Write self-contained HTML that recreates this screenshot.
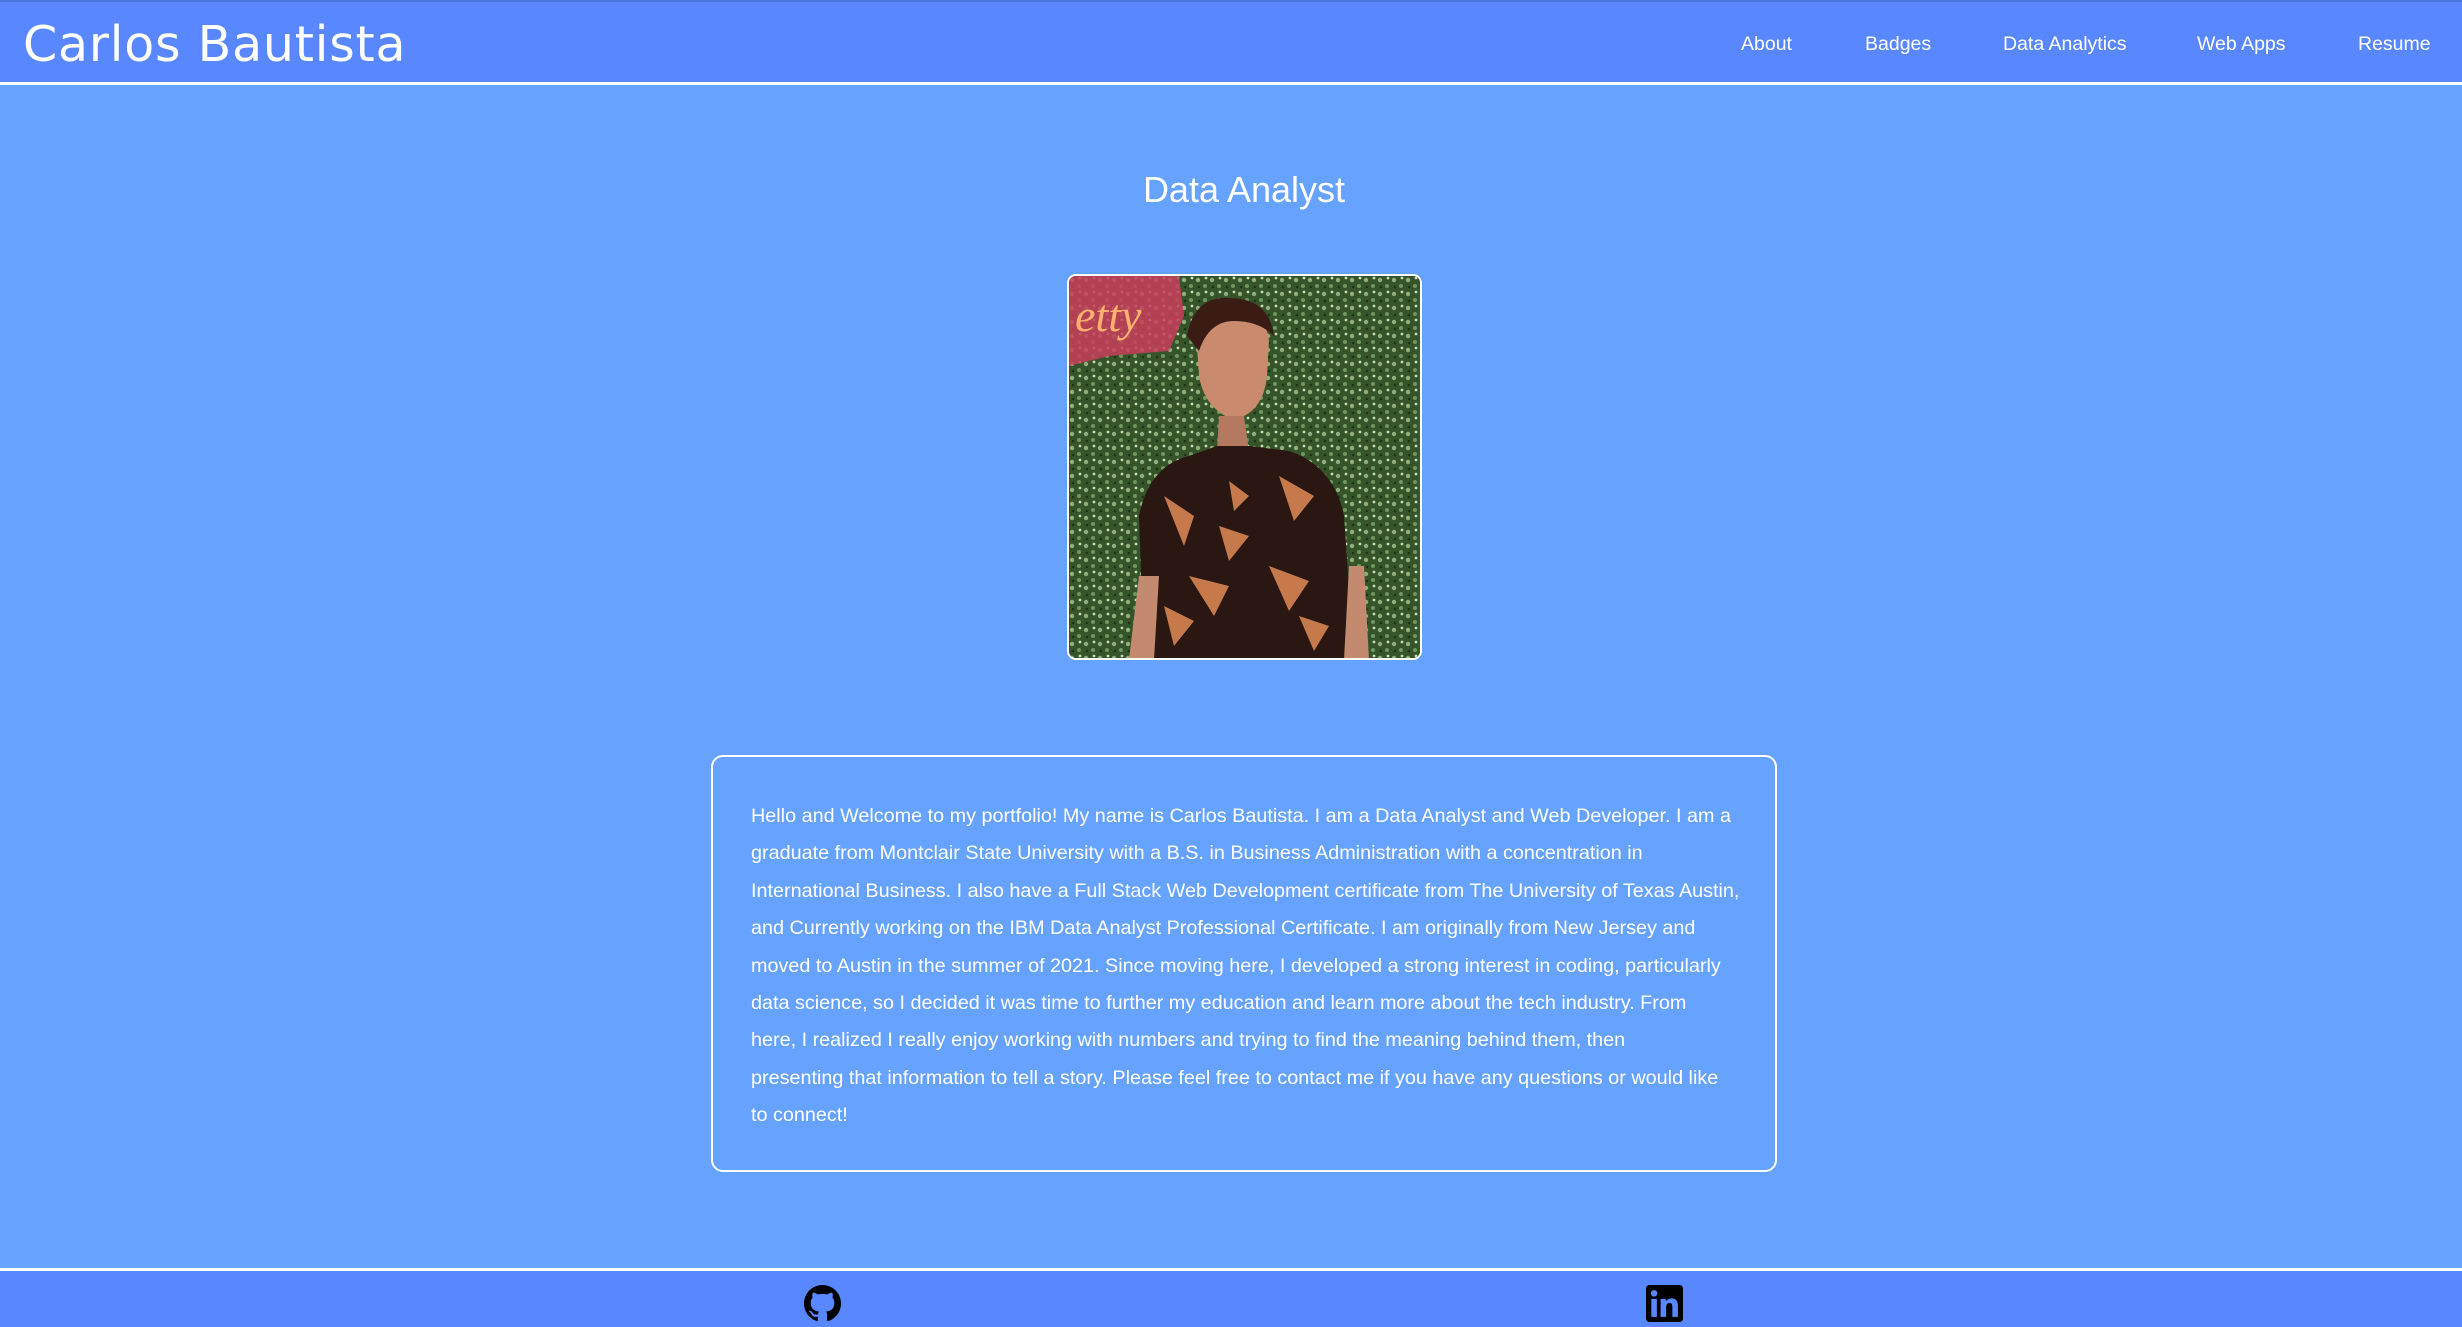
<!DOCTYPE html>
<html><head><meta charset="utf-8"><style>
*{margin:0;padding:0;box-sizing:border-box}
html,body{width:2462px;height:1327px;overflow:hidden}
body{background:#66a2ff;position:relative;font-family:"Liberation Sans",sans-serif;color:#fff}
.hdr{position:absolute;left:0;top:0;width:2462px;height:85px;background:#5887ff;border-bottom:3px solid #fff;border-top:2px solid #4a78e0}
.brand{position:absolute;left:23px;top:14px;font-family:"DejaVu Sans","Liberation Sans",sans-serif;font-size:49px;letter-spacing:0.8px}
.nav a{position:absolute;top:31px;font-size:19.5px;color:#fff;text-decoration:none;white-space:nowrap}
h1{position:absolute;left:0;width:2488px;text-align:center;top:169px;font-weight:normal;font-size:36px}
.photo{position:absolute;left:1067px;top:274px;width:355px;height:386px;border:2px solid #fff;border-radius:9px;overflow:hidden;background:#3b5a2c}
.box{position:absolute;left:711px;top:755px;width:1066px;height:417px;border:2px solid #fff;border-radius:12px;padding:41px 0 0 38px;font-size:19.8px;line-height:37.4px;white-space:nowrap}
.ftr{position:absolute;left:0;top:1268px;width:2462px;height:59px;background:#5887ff;border-top:3px solid #fff}
</style></head><body>
<div class="hdr"><div class="brand">Carlos Bautista</div>
<div class="nav"><a style="left:1741px">About</a><a style="left:1865px">Badges</a><a style="left:2003px">Data Analytics</a><a style="left:2197px">Web Apps</a><a style="left:2358px">Resume</a></div></div>
<h1>Data Analyst</h1>
<div class="photo"><svg width="353" height="384" viewBox="0 0 353 384">
<defs><pattern id="p" width="14" height="14" patternUnits="userSpaceOnUse"><rect width="14" height="14" fill="#35542a"/><circle cx="3" cy="4" r="2.2" fill="#8fb07a"/><circle cx="10" cy="10" r="2" fill="#6f9860"/><circle cx="11" cy="2" r="1.4" fill="#c8dcb8"/><circle cx="4" cy="11" r="1.3" fill="#1f3318"/></pattern></defs>
<rect width="353" height="384" fill="url(#p)"/>
<path d="M0 0H110L115 40 100 75 40 80 0 90Z" fill="#c8405a" opacity=".85"/>
<text x="6" y="55" font-family="Liberation Serif" font-style="italic" font-size="46" fill="#ffb070">etty</text>
<path d="M128 70Q140 25 165 28Q195 30 200 65L198 100Q195 130 175 140L160 142Q135 130 130 100Z" fill="#c98a6e"/>
<path d="M118 60Q125 20 160 22Q200 22 205 60Q190 45 165 45Q140 45 130 75Z" fill="#3a1c14"/>
<path d="M150 140L175 140 180 175 148 175Z" fill="#b57860"/>
<path d="M75 384L70 240Q80 190 120 180L148 170 180 170 220 175Q265 190 275 240L285 384Z" fill="#2a1712"/>
<path d="M95 220l30 20-10 30zM150 250l30 10-20 25zM210 200l35 20-20 25zM120 300l40 10-15 30zM200 290l40 15-20 30zM95 330l30 15-20 25zM230 340l30 10-15 25zM160 205l20 15-15 15z" fill="#c67a4c"/>
<path d="M70 300L60 384H85L90 300Z" fill="#c48a70"/><path d="M280 290L275 384H300L295 290Z" fill="#c48a70"/>
</svg></div>
<div class="box">Hello and Welcome to my portfolio! My name is Carlos Bautista. I am a Data Analyst and Web Developer. I am a<br>graduate from Montclair State University with a B.S. in Business Administration with a concentration in<br>International Business. I also have a Full Stack Web Development certificate from The University of Texas Austin,<br>and Currently working on the IBM Data Analyst Professional Certificate. I am originally from New Jersey and<br>moved to Austin in the summer of 2021. Since moving here, I developed a strong interest in coding, particularly<br>data science, so I decided it was time to further my education and learn more about the tech industry. From<br>here, I realized I really enjoy working with numbers and trying to find the meaning behind them, then<br>presenting that information to tell a story. Please feel free to contact me if you have any questions or would like<br>to connect!</div>
<div class="ftr">
<svg style="position:absolute;left:804px;top:14px" width="37" height="37" viewBox="0 0 16 16"><path fill="#000" d="M8 0C3.580 0 0 3.58 0 8c0 3.54 2.29 6.53 5.47 7.59.4.07.55-.17.55-.38 0-.19-.01-.82-.01-1.49-2.01.37-2.53-.49-2.690-.94-.09-.23-.48-.94-.82-1.13-.28-.15-.68-.52-.01-.53.63-.01 1.08.58 1.23.82.72 1.21 1.87.87 2.33.66.07-.52.28-.87.51-1.07-1.78-.2-3.64-.89-3.64-3.95 0-.87.31-1.590.82-2.15-.08-.2-.36-1.02.08-2.12 0 0 .67-.21 2.2.82.64-.18 1.32-.27 2-.27.68 0 1.36.09 2 .27 1.53-1.04 2.2-.82 2.2-.82.44 1.1.16 1.92.08 2.12.51.56.82 1.27.82 2.15 0 3.07-1.87 3.75-3.65 3.95.29.25.54.73.54 1.48 0 1.07-.01 1.93-.01 2.2 0 .21.15.46.55.38A8.013 8.013 0 0016 8c0-4.42-3.58-8-8-8z"/></svg>
<svg style="position:absolute;left:1646px;top:14px" width="37" height="37" viewBox="0 0 16 16"><rect width="16" height="16" rx="1.5" fill="#000"/><rect x="2.3" y="6" width="2.4" height="7.8" fill="#5887ff"/><circle cx="3.5" cy="3.6" r="1.4" fill="#5887ff"/><path d="M6.3 6h2.3v1.1c.4-.7 1.3-1.3 2.5-1.3 2.3 0 2.7 1.5 2.7 3.5v4.5h-2.4V9.8c0-.9 0-2-1.2-2s-1.5.9-1.5 1.9v4.1H6.3z" fill="#5887ff"/></svg>
</div>
</body></html>
